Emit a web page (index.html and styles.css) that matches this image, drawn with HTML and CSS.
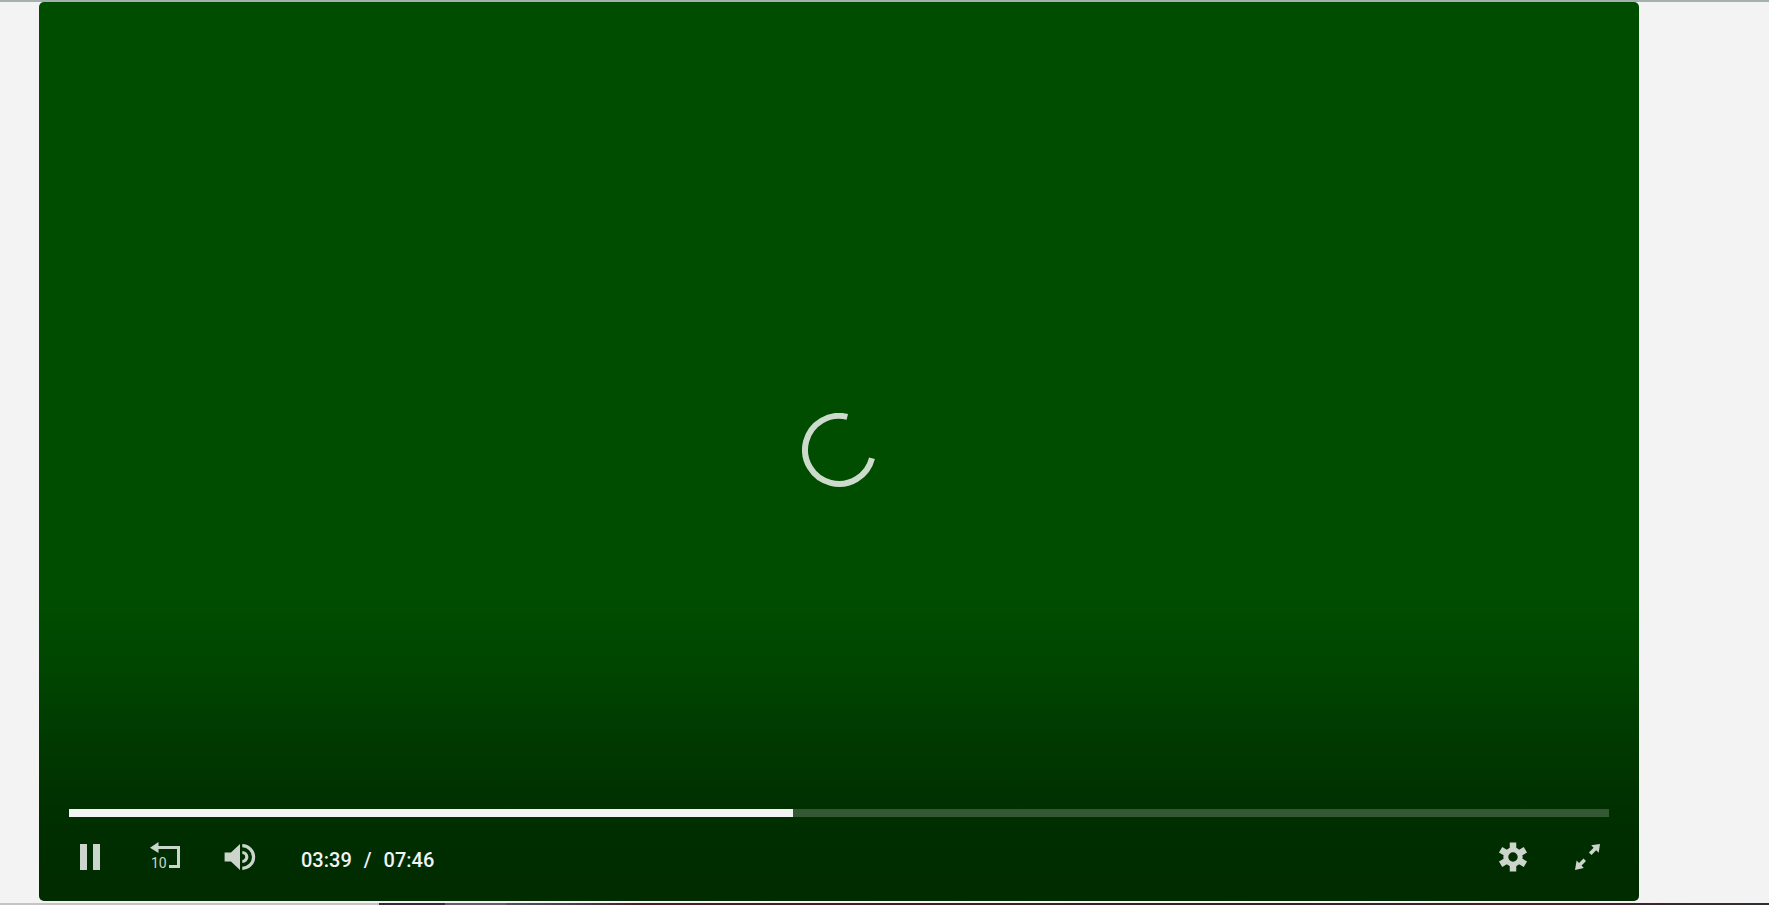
FILE: index.html
```
<!DOCTYPE html>

<html lang="en">
    <head>
        <meta charset="utf-8">
        <title>Video player</title>

        <link rel="stylesheet" href="styles.css">
    </head>

    <body>
        <div class="top-line"></div>

        <main class="player">
            <div class="screen">
                <svg class="spinner" viewBox="0 0 74 74" role="img" aria-label="Loading">
                    <path d="M45.3 3.9A34 34 0 1 0 70 45.2" fill="none" stroke="currentColor" stroke-width="6"/>
                </svg>
            </div>

            <div class="controls">
                <input class="progress" type="range" min="0" max="466" value="219" aria-label="Seek" style="--played: 47%">

                <div class="buttons">
                    <button class="button" type="button" aria-label="Pause">
                        <svg viewBox="0 0 32 32">
                            <path d="M6 3h7v26H6zM19 3h7v26h-7z"/>
                        </svg>
                    </button>
                    <button class="button" type="button" aria-label="Back 10 seconds">
                        <svg viewBox="0 0 32 32">
                            <path d="M1 6.8L9.500 1v4H31v22H20v-3h8V8H9.500v4z"/>
                            <text x="2" y="27">10</text>
                        </svg>
                    </button>
                    <button class="button" type="button" aria-label="Mute">
                        <svg viewBox="0 0 32 32">
                            <path d="M.6 11.5h6.4L16 3v26L7 20.5H.6z"/>
                            <path d="M18.3 4.7a11.3 11.3 0 0 1 0 22.6M18.3 11.5a4.5 4.5 0 0 1 0 9" fill="none" stroke="currentColor" stroke-width="3.2"/>
                        </svg>
                    </button>
                    <div class="time">
                        <span>03:39</span>
                        <span>/</span>
                        <span>07:46</span>
                    </div>
                    <button class="button settings" type="button" aria-label="Settings">
                        <svg viewBox="0 0 32 32" fill="none" stroke="currentColor">
                            <circle cx="16" cy="16" r="7.2" stroke-width="5" fill="none"/>
                            <path d="M16 8V1.500M16 24v6.500M22.900 12l5.500-3.200M9.100 20l-5.500 3.200M22.900 20l5.500 3.200M9.100 12L3.600 8.800" stroke-width="6.5"/>
                        </svg>
                    </button>
                    <button class="button" type="button" aria-label="Full screen">
                        <svg viewBox="0 0 32 32">
                            <path d="M28 3l-1.300 8.700-2.500-2.500-4.700 4.800-2.600-2.600 4.700-4.700-2.400-2.400zM3 29l1.600-9.500L7 21.900l4.500-4.400 2.500 2.500-4.500 4.500 2.300 2.500z"/>
                        </svg>
                    </button>
                </div>
            </div>
        </main>

        <div class="bottom-line"></div>
    </body>
</html>
```
FILE: styles.css
```
* {
    box-sizing: border-box;
}

body {
    display: flex;
    flex-direction: column;
    height: 100vh;
    margin: 0;
    overflow: hidden;
    background: #f3f3f3;
    font-family: Roboto, sans-serif;
}

.top-line {
    height: 2px;
    background: #a5b1af;
}

.player {
    display: flex;
    flex: 1;
    flex-direction: column;
    margin: 0 130px 2px 39px;
    border-radius: 5px;
    background: linear-gradient(to top, #002c00 0, #002e00 70px, #003200 110px, #003b00 170px, #004500 230px, #004d00 300px);
    color: #ccd5cc;
}

.screen {
    display: flex;
    flex: 1;
    align-items: center;
    justify-content: center;
    padding-top: 88px;
}

.spinner {
    width: 74px;
    height: 74px;
    color: #ccdbcc;
}

.controls {
    padding: 0 30px 28px;
}

.progress {
    display: block;
    width: 100%;
    height: 8px;
    margin: 0;
    appearance: none;
    background: linear-gradient(to right, #f3f3f3 var(--played), #335833 var(--played));
    cursor: pointer;
}

.progress::-webkit-slider-thumb {
    width: 0;
    height: 8px;
    appearance: none;
}

.buttons {
    display: flex;
    align-items: center;
    gap: 43px;
    margin: 24px 5px 0;
}

.button {
    width: 32px;
    height: 32px;
    padding: 0;
    border: 0;
    background: none;
    color: inherit;
    cursor: pointer;
}

.button svg {
    display: block;
    width: 32px;
    height: 32px;
    fill: currentColor;
}

.button text {
    font: 14px Roboto, sans-serif;
}

.time {
    display: flex;
    gap: 12px;
    padding: 6px 0 0 2px;
    color: #f3f3f3;
    font-size: 20px;
    font-weight: 500;
    line-height: 24px;
}

.settings {
    margin-left: auto;
}

.bottom-line {
    height: 2px;
    background: linear-gradient(to right, #c4c4c4 379px, #302d34 379px, #302d34 445px, #626068 445px, #626068 506px, #50535b 506px, #45444c 568px, #481d29 640px, #35202a 70%, #45202c 88%, #302d34);
}
```
